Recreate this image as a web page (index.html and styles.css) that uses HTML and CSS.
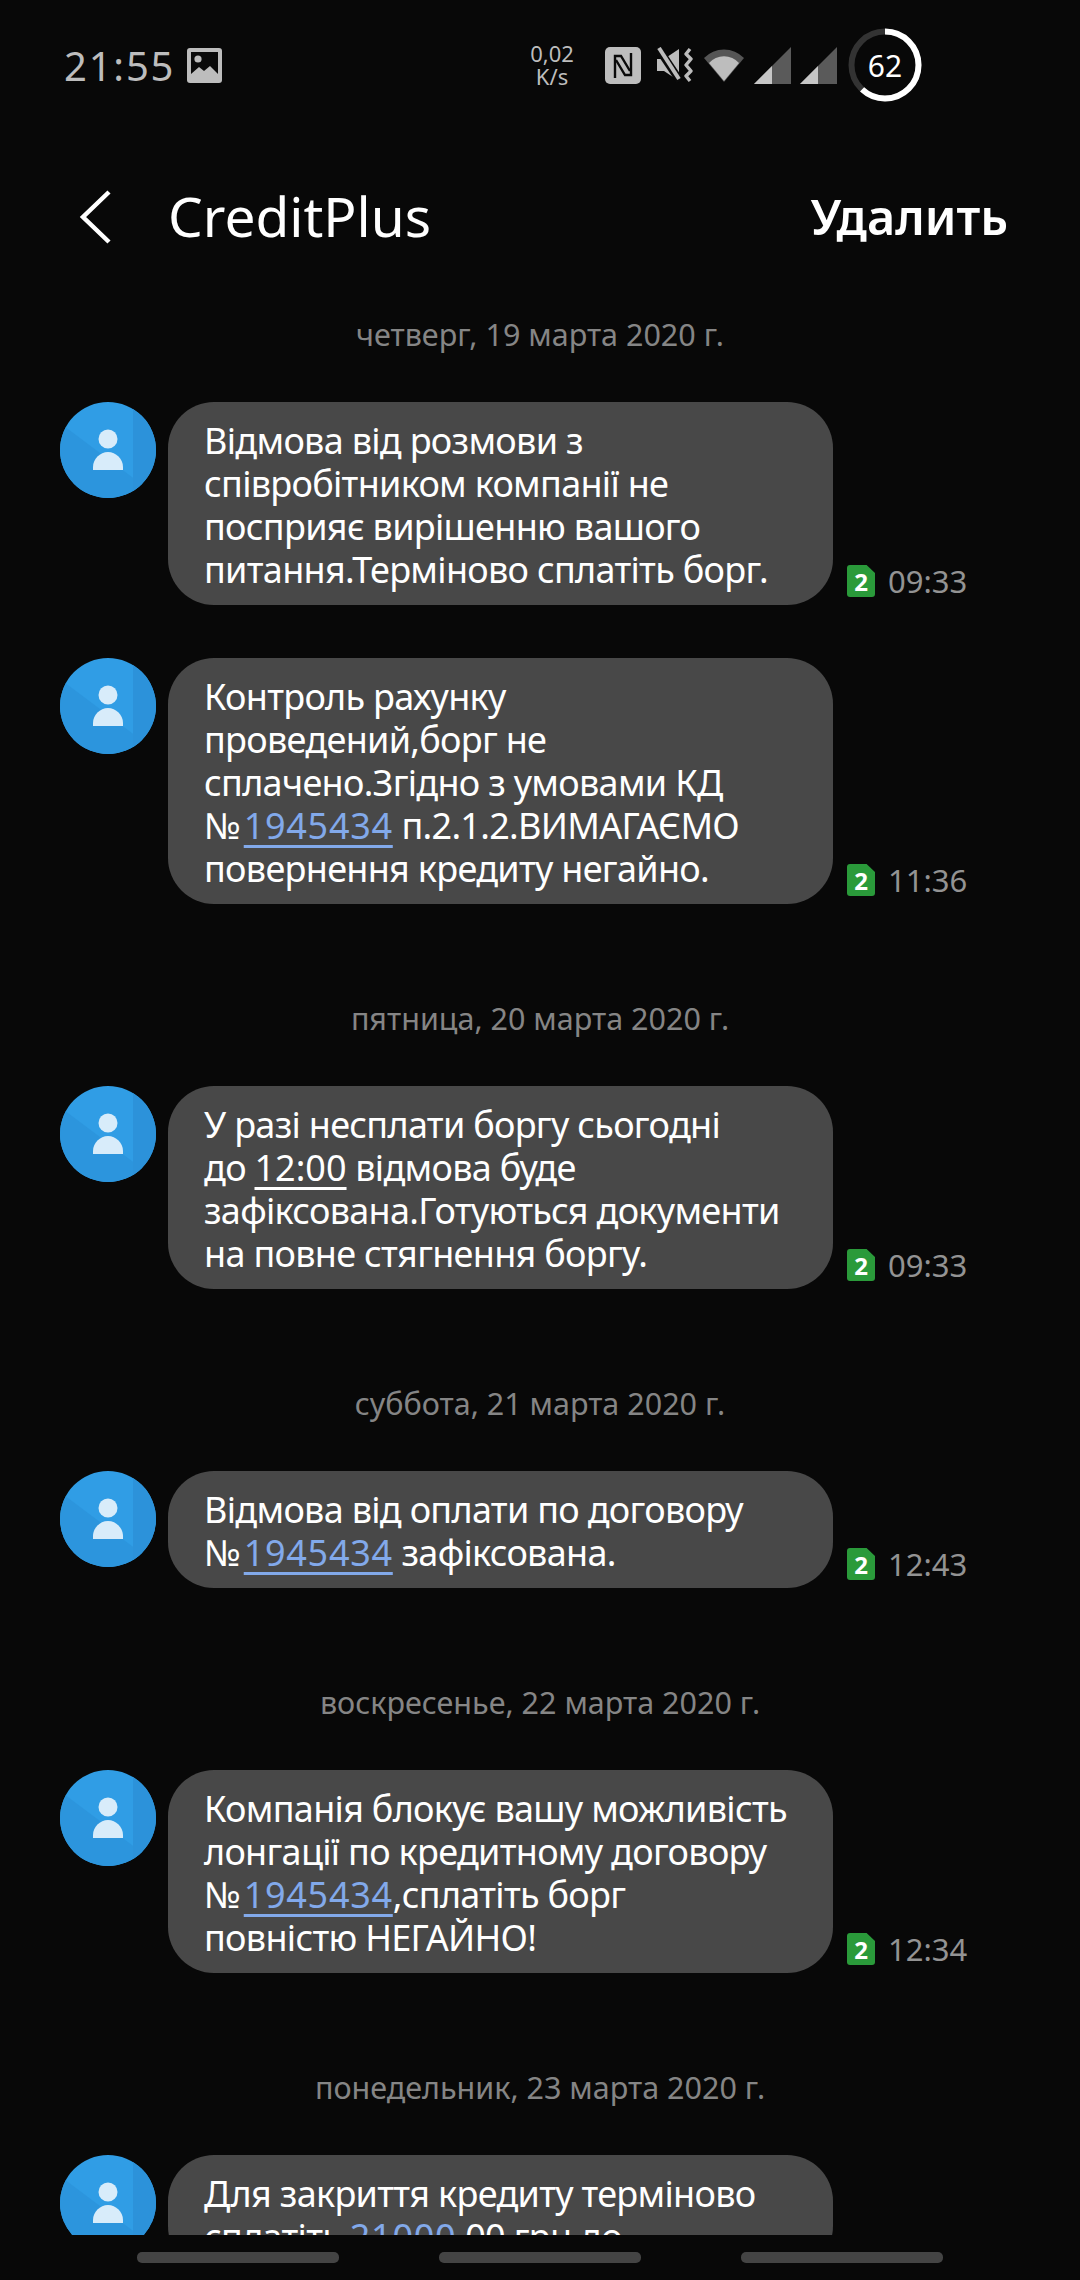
FILE: index.html
```html
<!DOCTYPE html>
<html lang="ru">

<head>
    <meta charset="UTF-8">
    <meta name="viewport" content="width=device-width, initial-scale=1.0">
    <title>CreditPlus</title>
    <link rel="stylesheet" href="styles.css">
</head>

<body>
    <svg class="defs" width="0" height="0">
        <clipPath id="avatar-clip">
            <circle cx="48" cy="48" r="48"/>
        </clipPath>
        <symbol id="avatar" viewBox="0 0 96 96">
            <g clip-path="url(#avatar-clip)">
                <rect width="96" height="96" fill="#309de5"/>
                <path d="M0 21l100 75H0z" fill="#2c95dd"/>
                <path d="M73 0h23v96H73z" fill="#2c92da"/>
            </g>
            <circle cx="48" cy="37" r="9.5" fill="#d8ecfa"/>
            <path d="M33 68v-3c0-8 7-15 15-15s15 7 15 15v3z" fill="#d8ecfa"/>
        </symbol>
    </svg>

    <div class="statusbar">
        <div class="status-left">
            <span class="clock">21:55</span>
            <svg class="ic-image" viewBox="0 0 35 35">
                <rect width="35" height="35" rx="3" fill="#bdbdbd"/>
                <path d="M4 4h27v22l-8-8-6 5-5-4-8 7z" fill="#0a0a0a"/>
                <circle cx="11" cy="11" r="3.6" fill="#bdbdbd"/>
            </svg>
        </div>
        <div class="status-right">
            <div class="speed"><span>0,02</span><span>K/s</span></div>
            <svg class="ic-nfc" viewBox="0 0 36 37">
                <rect width="36" height="37" rx="5" fill="#bdbdbd"/>
                <path d="M10 31V9h6l9 15" fill="none" stroke="#0a0a0a" stroke-width="2.4"/>
                <path d="M26 6v22h-6l-9-15" fill="none" stroke="#0a0a0a" stroke-width="2.4"/>
            </svg>
            <svg class="ic-mute" viewBox="0 0 36 36">
                <path d="M0 12h7L22 2v32L7 24H0z" fill="#bdbdbd"/>
                <path d="M-1 -2L23 34" stroke="#0a0a0a" stroke-width="8"/>
                <path d="M2 1L22 32" stroke="#bdbdbd" stroke-width="4"/>
                <path d="M33 2l-4 5 5 5-5 6 5 6-5 5 4 5" fill="none" stroke="#bdbdbd" stroke-width="3.4" stroke-linejoin="round"/>
            </svg>
            <svg class="ic-wifi" viewBox="0 0 40 33">
                <path d="M0 9a28 28 0 0 1 40 0L20 33z" fill="#555"/>
                <path d="M5 14a20 20 0 0 1 30 0L20 32z" fill="#bdbdbd"/>
            </svg>
            <svg class="ic-signal" viewBox="0 0 37 37">
                <path d="M37 0v37H0z" fill="#5a5a5a"/>
                <path d="M18 19v18H0z" fill="#c6c6c6"/>
            </svg>
            <svg class="ic-signal" viewBox="0 0 37 37">
                <path d="M37 0v37H0z" fill="#5a5a5a"/>
                <path d="M18 19v18H0z" fill="#c6c6c6"/>
            </svg>
            <div class="battery">
                <svg class="battery-ring" viewBox="0 0 74 74">
                    <circle cx="37" cy="37" r="33.5" fill="none" stroke="#333" stroke-width="6"/>
                    <circle cx="37" cy="37" r="33.5" fill="none" stroke="#fff" stroke-width="6" pathLength="100" stroke-dasharray="62 38" transform="rotate(-90 37 37)"/>
                </svg>
                <span class="battery-level">62</span>
            </div>
        </div>
    </div>

    <div class="navbar">
        <svg class="ic-back" viewBox="0 0 34 54">
            <path d="M31 2L5 27l26 25" fill="none" stroke="#fff" stroke-width="4.5"/>
        </svg>
        <span class="nav-title">CreditPlus</span>
        <span class="nav-action">Удалить</span>
    </div>

    <div class="thread">
        <section class="day">
            <div class="date">четверг, 19 марта 2020 г.</div>
            <div class="msg">
                <svg class="avatar"><use href="#avatar"/></svg>
                <div class="bubble">Відмова від розмови з<br>співробітником компанії не<br>посприяє вирішенню вашого<br>питання.Терміново сплатіть борг.</div>
                <div class="meta"><span class="sim">2</span><span class="time">09:33</span></div>
            </div>
            <div class="msg">
                <svg class="avatar"><use href="#avatar"/></svg>
                <div class="bubble">Контроль рахунку<br>проведений,борг не<br>сплачено.Згідно з умовами КД<br><span class="num">№</span><a class="link" href="#">1945434</a> п.2.1.2.ВИМАГАЄМО<br>повернення кредиту негайно.</div>
                <div class="meta"><span class="sim">2</span><span class="time">11:36</span></div>
            </div>
        </section>

        <section class="day">
            <div class="date">пятница, 20 марта 2020 г.</div>
            <div class="msg">
                <svg class="avatar"><use href="#avatar"/></svg>
                <div class="bubble">У разі несплати боргу сьогодні<br>до <a class="link-plain" href="#">12:00</a> відмова буде<br>зафіксована.Готуються документи<br>на повне стягнення боргу.</div>
                <div class="meta"><span class="sim">2</span><span class="time">09:33</span></div>
            </div>
        </section>

        <section class="day">
            <div class="date">суббота, 21 марта 2020 г.</div>
            <div class="msg">
                <svg class="avatar"><use href="#avatar"/></svg>
                <div class="bubble">Відмова від оплати по договору<br><span class="num">№</span><a class="link" href="#">1945434</a> зафіксована.</div>
                <div class="meta"><span class="sim">2</span><span class="time">12:43</span></div>
            </div>
        </section>

        <section class="day">
            <div class="date">воскресенье, 22 марта 2020 г.</div>
            <div class="msg">
                <svg class="avatar"><use href="#avatar"/></svg>
                <div class="bubble">Компанія блокує вашу можливість<br>лонгації по кредитному договору<br><span class="num">№</span><a class="link" href="#">1945434</a>,сплатіть борг<br>повністю НЕГАЙНО!</div>
                <div class="meta"><span class="sim">2</span><span class="time">12:34</span></div>
            </div>
        </section>

        <section class="day">
            <div class="date">понедельник, 23 марта 2020 г.</div>
            <div class="msg">
                <svg class="avatar"><use href="#avatar"/></svg>
                <div class="bubble">Для закриття кредиту терміново<br>сплатіть <a class="link" href="#">21000</a>,00 грн до</div>
            </div>
        </section>
    </div>

    <div class="navkeys">
        <span class="navkey"></span>
        <span class="navkey"></span>
        <span class="navkey"></span>
    </div>
</body>

</html>
```

FILE: styles.css
```css
* {
    box-sizing: border-box;
}

body {
    margin: 0;
    width: 1080px;
    height: 2280px;
    overflow: hidden;
    display: flex;
    flex-direction: column;
    background-color: #080808;
    color: #fff;
    font-family: "Noto Sans", "Open Sans", sans-serif;
}

.defs {
    position: absolute;
}

/* Status bar */
.statusbar {
    height: 130px;
    flex-shrink: 0;
    display: flex;
    align-items: center;
    justify-content: space-between;
    padding: 0 158px 0 64px;
}

.status-left,
.status-right {
    display: flex;
    align-items: center;
}

.clock {
    font-size: 40px;
    letter-spacing: 1.8px;
    color: #bdbdbd;
}

.ic-image {
    width: 35px;
    height: 35px;
    margin-left: 12px;
}

.speed {
    width: 46px;
    margin-right: 30px;
    display: flex;
    flex-direction: column;
    align-items: center;
    font-size: 22px;
    line-height: 23px;
    color: #bdbdbd;
}

.ic-nfc {
    width: 36px;
    height: 37px;
    margin-right: 16px;
}

.ic-mute {
    width: 36px;
    height: 36px;
    margin-right: 11px;
}

.ic-wifi {
    width: 40px;
    height: 33px;
    margin-right: 10px;
}

.ic-signal {
    width: 37px;
    height: 37px;
    margin-right: 9px;
}

.battery {
    position: relative;
    width: 74px;
    height: 74px;
    margin-left: 2px;
    display: flex;
    align-items: center;
    justify-content: center;
}

.battery-ring {
    position: absolute;
    inset: 0;
}

.battery-level {
    font-size: 30px;
}

/* Title row */
.navbar {
    height: 174px;
    flex-shrink: 0;
    display: flex;
    align-items: center;
    padding: 0 72px 0 78px;
}

.ic-back {
    width: 34px;
    height: 54px;
}

.nav-title {
    margin: 0 0 3px 56px;
    font-size: 55px;
}

.nav-action {
    margin: 0 0 3px auto;
    font-size: 48.5px;
    font-weight: 600;
}

/* Messages */
.thread {
    flex: 1;
    min-height: 0;
    overflow: hidden;
}

.day {
    margin-top: 93px;
}

.day:first-child {
    margin-top: 9px;
}

.date {
    height: 42px;
    margin-bottom: 47px;
    text-align: center;
    font-size: 30.5px;
    line-height: 42px;
    color: #858585;
}

.msg {
    display: flex;
    align-items: flex-end;
    padding-left: 60px;
}

.msg + .msg {
    margin-top: 53px;
}

.avatar {
    align-self: flex-start;
    width: 96px;
    height: 96px;
    flex-shrink: 0;
}

.bubble {
    width: 665px;
    margin-left: 12px;
    padding: 17px 36px 14px;
    border-radius: 46px;
    background-color: #484848;
    font-size: 36px;
    letter-spacing: -0.7px;
    line-height: 43px;
    white-space: nowrap;
}

.num {
    letter-spacing: 3px;
}

.link,
.link-plain {
    text-decoration: underline;
    text-underline-offset: 6px;
    text-decoration-thickness: 3px;
}

.link {
    color: #82a9ea;
    letter-spacing: 0.7px;
}

.link-plain {
    color: #fff;
    letter-spacing: 0;
}

.meta {
    display: flex;
    align-items: center;
    margin: 0 0 8px 14px;
}

.sim {
    width: 28px;
    height: 32px;
    display: flex;
    align-items: center;
    justify-content: center;
    border-radius: 3px;
    background-color: #2a9a3a;
    clip-path: polygon(0 0, 70% 0, 100% 25%, 100% 100%, 0 100%);
    font-size: 24px;
    font-weight: 700;
}

.time {
    margin-left: 13px;
    font-size: 31px;
    line-height: 32px;
    color: #939393;
}

/* Bottom soft keys */
.navkeys {
    height: 45px;
    flex-shrink: 0;
    display: flex;
    justify-content: center;
    gap: 100px;
    padding-top: 17px;
}

.navkey {
    width: 202px;
    height: 11px;
    border-radius: 5px;
    background-color: #444;
}
```
